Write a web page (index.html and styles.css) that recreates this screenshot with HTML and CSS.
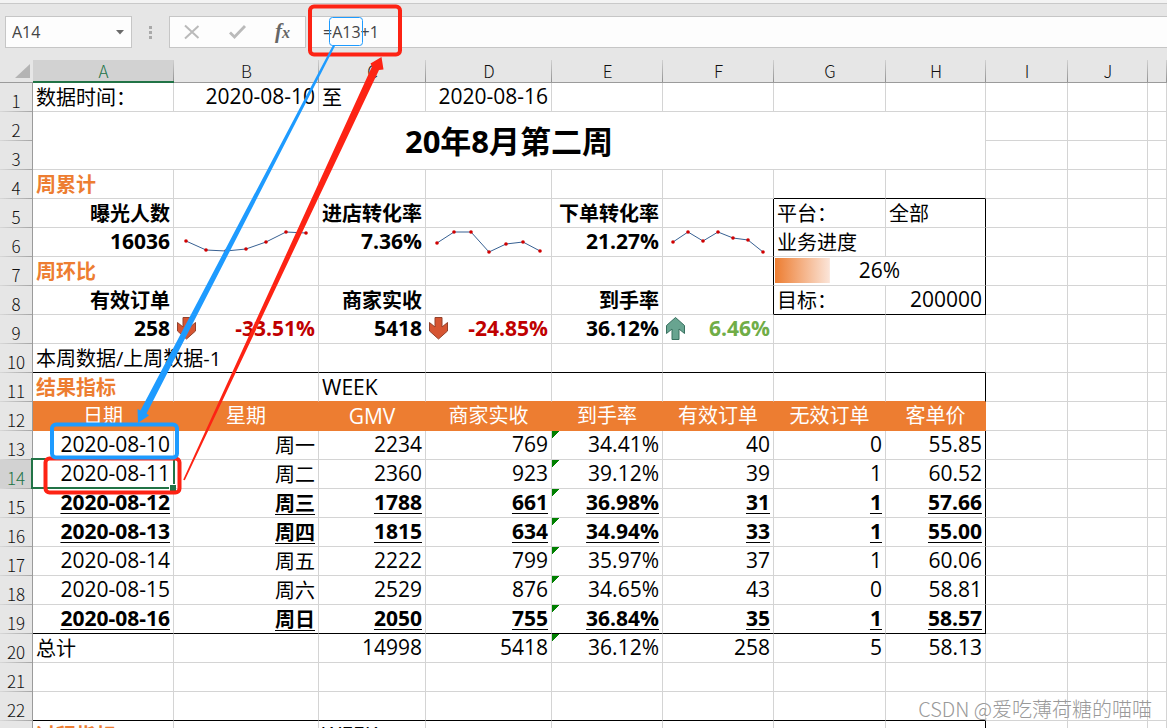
FILE: index.html
```html
<!DOCTYPE html>
<html lang="zh-CN">
<head>
<meta charset="utf-8">
<title>20年8月第二周</title>
<link rel="stylesheet" href="styles.css">
</head>
<body>
<header class="formula-bar">
  <div class="name-box">
    <input class="name-input" type="text" value="A14" aria-label="名称框">
    <button class="name-drop" type="button" aria-label="展开名称"><svg width="8" height="5" viewBox="0 0 8 5"><path d="M0 0H8L4 4.500Z" fill="#6a6a6a"/></svg></button>
  </div>
  <div class="grip" aria-hidden="true"><i></i><i></i><i></i></div>
  <div class="actions">
    <button type="button" aria-label="取消"><svg width="18" height="16" viewBox="0 0 18 16"><path d="M1 1.500L14.500 14M14.500 2L1 14.500" fill="none" stroke="#bababa" stroke-width="2"/></svg></button>
    <button type="button" aria-label="输入"><svg width="18" height="16" viewBox="0 0 18 16"><path d="M1 8.500L5.500 13L16 2" fill="none" stroke="#bababa" stroke-width="2.800"/></svg></button>
    <button class="fx" type="button" aria-label="插入函数">f<span>x</span></button>
  </div>
  <input class="formula-input" type="text" value="=A13+1" aria-label="编辑栏">
</header>

<main>
<table class="sheet">
  <colgroup><col class="w-head"><col class="w-a"><col class="w-b"><col class="w-c"><col class="w-d"><col class="w-e"><col class="w-e"><col class="w-g"><col class="w-h"><col class="w-i"><col class="w-j"><col></colgroup>
  <thead>
    <tr><th class="corner"><svg width="15" height="14" viewBox="0 0 15 14"><path d="M15 0V14H0Z" fill="#b4b4b4"/></svg></th><th class="active">A</th><th>B</th><th>C</th><th>D</th><th>E</th><th>F</th><th>G</th><th>H</th><th>I</th><th>J</th><th></th></tr>
  </thead>
  <tbody>
    <tr><th>1</th><td>数据时间：</td><td class="n">2020-08-10</td><td>至</td><td class="n">2020-08-16</td><td></td><td></td><td></td><td></td><td></td><td></td><td></td></tr>
    <tr><th>2</th><td class="title" colspan="8" rowspan="2">20年8月第二周</td><td></td><td></td><td></td></tr>
    <tr><th>3</th><td></td><td></td><td></td></tr>
    <tr><th>4</th><td class="section">周累计</td><td></td><td></td><td></td><td></td><td></td><td class="line-b"></td><td class="line-b"></td><td></td><td></td><td></td></tr>
    <tr><th>5</th><td class="label">曝光人数</td><td></td><td class="label">进店转化率</td><td></td><td class="label">下单转化率</td><td class="line-r"></td><td>平台：</td><td class="line-r">全部</td><td></td><td></td><td></td></tr>
    <tr><th>6</th><td class="n b">16036</td>
      <td class="spark"><svg width="144" height="28" viewBox="0 0 144 28"><polyline points="12,13 32,22 52,23 72,21 92,14 112,4 132,5"/><circle cx="12" cy="13" r="1.800"/><circle cx="32" cy="22" r="1.800"/><circle cx="52" cy="23" r="1.800"/><circle cx="72" cy="21" r="1.800"/><circle cx="92" cy="14" r="1.800"/><circle cx="112" cy="4" r="1.800"/><circle cx="132" cy="5" r="1.800"/></svg></td>
      <td class="n b">7.36%</td>
      <td class="spark"><svg width="125" height="28" viewBox="0 0 125 28"><polyline points="11,15 28,4 45,4 63,24 80,16 97,14 114,23"/><circle cx="11" cy="15" r="1.800"/><circle cx="28" cy="4" r="1.800"/><circle cx="45" cy="4" r="1.800"/><circle cx="63" cy="24" r="1.800"/><circle cx="80" cy="16" r="1.800"/><circle cx="97" cy="14" r="1.800"/><circle cx="114" cy="23" r="1.800"/></svg></td>
      <td class="n b">21.27%</td>
      <td class="spark line-r"><svg width="110" height="28" viewBox="0 0 110 28"><polyline points="10,14 25,4 40,13 55,4 70,10 85,12 100,24"/><circle cx="10" cy="14" r="1.800"/><circle cx="25" cy="4" r="1.800"/><circle cx="40" cy="13" r="1.800"/><circle cx="55" cy="4" r="1.800"/><circle cx="70" cy="10" r="1.800"/><circle cx="85" cy="12" r="1.800"/><circle cx="100" cy="24" r="1.800"/></svg></td>
      <td>业务进度</td><td class="line-r"></td><td></td><td></td><td></td></tr>
    <tr><th>7</th><td class="section">周环比</td><td></td><td></td><td></td><td></td><td class="line-r"></td><td class="n progress line-r" colspan="2">26%</td><td></td><td></td><td></td></tr>
    <tr><th>8</th><td class="label">有效订单</td><td></td><td class="label">商家实收</td><td></td><td class="label">到手率</td><td class="line-r"></td><td class="line-b">目标：</td><td class="n line-b line-r">200000</td><td></td><td></td><td></td></tr>
    <tr><th>9</th><td class="n b">258</td>
      <td class="n b down"><div class="trend"><svg width="20" height="24" viewBox="0 0 20 24"><path d="M6 1.500H13V11L18.500 6.500V15L9.500 23L.500 15V6.500L6 11Z" fill="#d65532" stroke="#93412b"/></svg><span>-33.51%</span></div></td>
      <td class="n b">5418</td>
      <td class="n b down"><div class="trend"><svg width="20" height="24" viewBox="0 0 20 24"><path d="M6 1.500H13V11L18.500 6.500V15L9.500 23L.500 15V6.500L6 11Z" fill="#d65532" stroke="#93412b"/></svg><span>-24.85%</span></div></td>
      <td class="n b">36.12%</td>
      <td class="n b up"><div class="trend"><svg width="20" height="24" viewBox="0 0 20 24"><path d="M6 23.500H13V13L18.500 17.500V9.500L9.500 1.500L.500 9.500V17.500L6 13Z" fill="#68a490" stroke="#38705f"/></svg><span>6.46%</span></div></td>
      <td></td><td></td><td></td><td></td><td></td></tr>
    <tr><th>10</th><td class="line-b" colspan="2">本周数据/上周数据-1</td><td class="line-b"></td><td class="line-b"></td><td class="line-b"></td><td class="line-b"></td><td class="line-b"></td><td class="line-b"></td><td></td><td></td><td></td></tr>
    <tr><th>11</th><td class="section band-b">结果指标</td><td class="band-b"></td><td class="n week band-b">WEEK</td><td class="band-b"></td><td class="band-b"></td><td class="band-b"></td><td class="band-b"></td><td class="band-b line-r"></td><td></td><td></td><td></td></tr>
    <tr><th>12</th><td class="band">日期</td><td class="band">星期</td><td class="n band">GMV</td><td class="band">商家实收</td><td class="band">到手率</td><td class="band">有效订单</td><td class="band">无效订单</td><td class="band">客单价</td><td></td><td></td><td></td></tr>
    <tr><th>13</th><td class="n">2020-08-10</td><td class="r">周一</td><td class="n">2234</td><td class="n">769</td><td class="n flag">34.41%</td><td class="n">40</td><td class="n">0</td><td class="n line-r">55.85</td><td></td><td></td><td></td></tr>
    <tr><th class="active">14</th><td class="n selected">2020-08-11</td><td class="r">周二</td><td class="n">2360</td><td class="n">923</td><td class="n flag">39.12%</td><td class="n">39</td><td class="n">1</td><td class="n line-r">60.52</td><td></td><td></td><td></td></tr>
    <tr class="strong"><th>15</th><td class="n">2020-08-12</td><td class="r">周三</td><td class="n">1788</td><td class="n">661</td><td class="n flag">36.98%</td><td class="n">31</td><td class="n">1</td><td class="n line-r">57.66</td><td></td><td></td><td></td></tr>
    <tr class="strong"><th>16</th><td class="n">2020-08-13</td><td class="r">周四</td><td class="n">1815</td><td class="n">634</td><td class="n flag">34.94%</td><td class="n">33</td><td class="n">1</td><td class="n line-r">55.00</td><td></td><td></td><td></td></tr>
    <tr><th>17</th><td class="n">2020-08-14</td><td class="r">周五</td><td class="n">2222</td><td class="n">799</td><td class="n flag">35.97%</td><td class="n">37</td><td class="n">1</td><td class="n line-r">60.06</td><td></td><td></td><td></td></tr>
    <tr><th>18</th><td class="n">2020-08-15</td><td class="r">周六</td><td class="n">2529</td><td class="n">876</td><td class="n flag">34.65%</td><td class="n">43</td><td class="n">0</td><td class="n line-r">58.81</td><td></td><td></td><td></td></tr>
    <tr class="strong"><th>19</th><td class="n line-b">2020-08-16</td><td class="r line-b">周日</td><td class="n line-b">2050</td><td class="n line-b">755</td><td class="n flag line-b">36.84%</td><td class="n line-b">35</td><td class="n line-b">1</td><td class="n line-b line-r">58.57</td><td></td><td></td><td></td></tr>
    <tr><th>20</th><td>总计</td><td></td><td class="n">14998</td><td class="n">5418</td><td class="n flag">36.12%</td><td class="n">258</td><td class="n">5</td><td class="n">58.13</td><td></td><td></td><td></td></tr>
    <tr><th>21</th><td></td><td></td><td></td><td></td><td></td><td></td><td></td><td></td><td></td><td></td><td></td></tr>
    <tr><th>22</th><td class="line-b"></td><td class="line-b"></td><td class="line-b"></td><td class="line-b"></td><td class="line-b"></td><td class="line-b"></td><td class="line-b"></td><td class="line-b"></td><td></td><td></td><td></td></tr>
    <tr><th></th><td class="section">过程指标</td><td></td><td class="n week">WEEK</td><td></td><td></td><td></td><td></td><td class="line-r"></td><td></td><td></td><td></td></tr>
  </tbody>
</table>
</main>

<svg class="marks" width="420" height="500" viewBox="0 0 420 500" aria-hidden="true">
  <rect x="45.500" y="458.500" width="134" height="34" rx="4" fill="none" stroke="#fd2314" stroke-width="4"/>
  <path d="M184.800 480.300L379 70L383.500 69.500L381.500 57L370.500 63.500L372 66.500L183.200 479.700Z" fill="#fd2314"/>
  <rect x="310" y="6.500" width="90" height="48" rx="4" fill="none" stroke="#fd2314" stroke-width="4"/>
  <rect x="329.500" y="17.500" width="33" height="28" rx="3" fill="none" stroke="#1e9bff"/>
  <path d="M333 45L140.400 410.400L137.500 409L138 423L149 415.500L146.600 413.600L335 46Z" fill="#1e9bff"/>
  <rect x="52" y="424.500" width="125" height="33" rx="4" fill="none" stroke="#1e9bff" stroke-width="4"/>
</svg>
<div class="watermark">CSDN @爱吃薄荷糖的喵喵</div>
</body>
</html>
```
FILE: styles.css
```css
* { box-sizing: border-box; }

html, body { height: 100%; }

body {
  position: relative;
  margin: 0;
  overflow: hidden;
  background: #e6e6e6;
  color: #000;
  font-family: "Open Sans", "Noto Sans CJK SC", sans-serif;
  font-size: 20px;
}

button, input {
  margin: 0;
  padding: 0;
  border: 0;
  background: none;
  font-family: inherit;
  color: inherit;
}

/* formula bar */
.formula-bar {
  display: flex;
  height: 60px;
  padding: 13px 0 12px 5px;
  border-top: 3px solid #f3f3f3;
  box-shadow: inset 0 1px #c9c9c9;
  color: #444;
}

.name-box, .actions {
  display: flex;
  border: 1px solid #c6c6c6;
  background: #fdfdfd;
}

.name-box { width: 127px; }

.name-input {
  flex: 1;
  min-width: 0;
  padding-left: 6px;
  font-size: 16px;
}

.name-drop { width: 22px; }
.name-drop svg { display: block; margin: auto; }

.grip {
  display: flex;
  flex-direction: column;
  justify-content: center;
  gap: 2px;
  width: 37px;
  padding-left: 17px;
}

.grip i { width: 3px; height: 3px; background: #a9a9a9; }

.actions { width: 137px; }
.actions button { flex: 1; }
.actions svg { display: block; margin: auto; }

.actions .fx {
  color: #666;
  font: italic bold 21px/28px "Liberation Serif", serif;
}

.fx span { font-size: 16px; }

.formula-input {
  flex: 1;
  min-width: 0;
  margin-left: 2px;
  padding-left: 14px;
  border: 1px solid #c6c6c6;
  border-right: 0;
  background: #fdfdfd;
  font-size: 16px;
}

/* grid */
.sheet {
  width: 100%;
  table-layout: fixed;
  border-collapse: separate;
  border-spacing: 0;
}

.w-head { width: 33px; }
.w-a { width: 141px; }
.w-b { width: 145px; }
.w-c { width: 107px; }
.w-d { width: 126px; }
.w-e { width: 111px; }
.w-g { width: 112px; }
.w-h { width: 100px; }
.w-i { width: 82px; }
.w-j { width: 80px; }

th {
  padding: 0;
  color: #111;
  font-family: "Noto Sans CJK SC", sans-serif;
  font-size: 17px;
  font-weight: 300;
}

thead th {
  height: 23px;
  border-bottom: 1px solid #9b9b9b;
  background: linear-gradient(#d0d0d0, #929292) right / 1px 100% no-repeat #e6e6e6;
  line-height: 22px;
}

thead .active {
  border-bottom: 2px solid #217346;
  background-color: #d2d2d2;
  color: #217346;
  line-height: 21px;
}

thead .corner { background-image: none; }
.corner svg { display: block; margin: 0 3px 0 auto; }

tbody th {
  height: 29px;
  padding-top: 6px;
  border-right: 1px solid #9b9b9b;
  background: linear-gradient(to right, #d8d8d8, #a5a5a5) bottom / 100% 1px no-repeat #e6e6e6;
  line-height: 23px;
}

tbody .active { background-color: #d2d2d2; color: #217346; }

td {
  height: 29px;
  padding: 2px 3px 0;
  border-right: 1px solid #d4d4d4;
  border-bottom: 1px solid #d4d4d4;
  background-color: #fff;
  line-height: 26px;
  white-space: nowrap;
}

.n { padding: 0 3px 2px; font-size: 21px; text-align: right; }
.r { text-align: right; }
.b { font-weight: 700; }
.label { font-weight: 700; text-align: right; }
.section { color: #ed7d31; font-weight: 700; }
.title { padding-top: 0; font-size: 31px; font-weight: 700; text-align: center; }
.week { padding-bottom: 0; text-align: left; }
.line-b { border-bottom-color: #000; }
.line-r { border-right-color: #000; }
.band-b { border-bottom-color: #ed7d31; }

.band {
  padding: 0 3px;
  border-color: #ed7d31;
  background-color: #ed7d31;
  color: #fff;
  text-align: center;
}

.spark { padding: 0; }
.spark svg { display: block; }
.spark polyline { fill: none; stroke: #376092; }
.spark circle { fill: #d00000; }

.trend {
  display: flex;
  align-items: center;
  justify-content: space-between;
  height: 26px;
}

.down { color: #c00000; }
.up { color: #70ad47; }

.progress {
  background: linear-gradient(to right, #ed7d31, #fbe5d9) 1px 1px / 26% 25px no-repeat #fff;
  text-align: center;
}

.strong td {
  font-weight: 700;
  text-decoration: underline 1px;
  text-decoration-skip-ink: none;
  text-underline-offset: 3px;
}

.flag {
  background-image: linear-gradient(to bottom right, #008000 50%, transparent 50%);
  background-size: 8px 8px;
  background-repeat: no-repeat;
}

.selected { position: relative; }

.selected::before {
  content: "";
  position: absolute;
  inset: -2px -2px -1px -2px;
  border: 2px solid #217346;
}

.selected::after {
  content: "";
  position: absolute;
  right: -3px;
  bottom: -3px;
  width: 6px;
  height: 6px;
  border: solid #fff;
  border-width: 1px 0 0 1px;
  background: #217346;
}

/* annotations drawn over the sheet */
.marks { position: absolute; top: 0; left: 0; }

.watermark {
  position: absolute;
  right: 15px;
  bottom: 5px;
  color: #999;
  font-family: "Noto Sans CJK SC", sans-serif;
  font-weight: 300;
  line-height: 28px;
}
```
